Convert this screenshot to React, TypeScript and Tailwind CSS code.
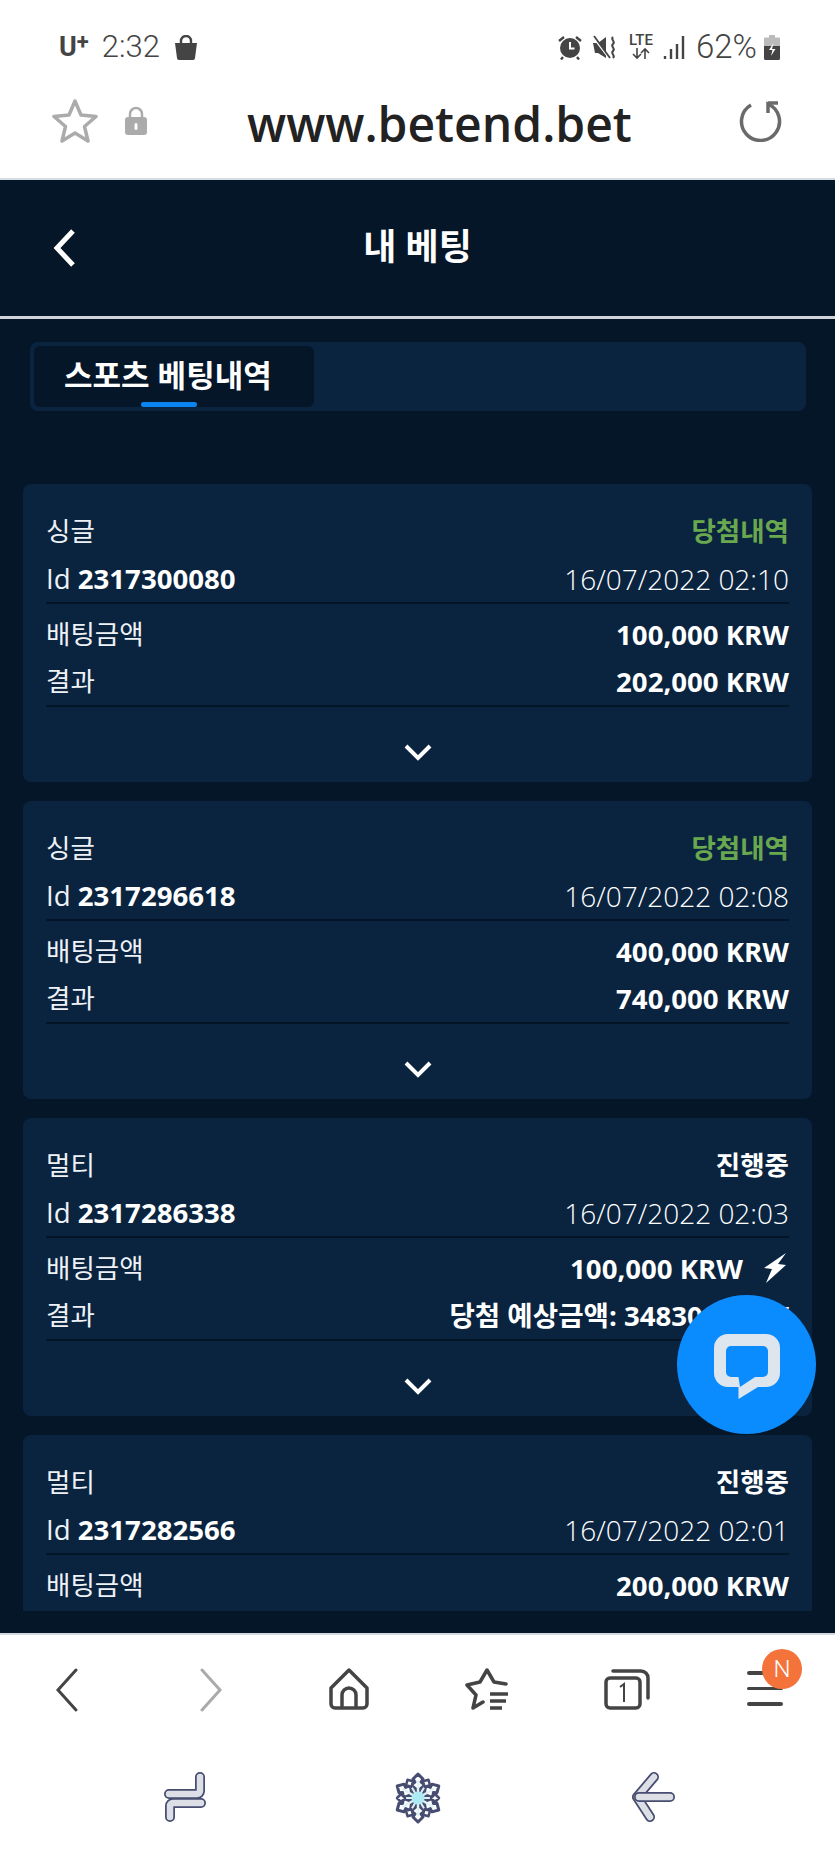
import React from 'react';

const FONT = "font-['Open_Sans','Noto_Sans_CJK_KR',sans-serif]";

interface Bet {
  kind: string;
  status: string;
  win?: boolean;
  id: string;
  date: string;
  stake: string;
  result?: string;
  bolt?: boolean;
}

const bets: Bet[] = [
  { kind: '싱글', status: '당첨내역', win: true, id: '2317300080', date: '16/07/2022 02:10', stake: '100,000 KRW', result: '202,000 KRW' },
  { kind: '싱글', status: '당첨내역', win: true, id: '2317296618', date: '16/07/2022 02:08', stake: '400,000 KRW', result: '740,000 KRW' },
  { kind: '멀티', status: '진행중', id: '2317286338', date: '16/07/2022 02:03', stake: '100,000 KRW', result: '당첨 예상금액: 348300 KRW', bolt: true },
  { kind: '멀티', status: '진행중', id: '2317282566', date: '16/07/2022 02:01', stake: '200,000 KRW' },
];

const StatusIcons = () => (
  <div className="flex items-center">
    {/* alarm */}
    <svg width="24" height="26" viewBox="0 0 24 26" className="mr-[10px]">
      <circle cx="12" cy="14" r="10" fill="#444" />
      <path d="M12 8v6.5h4.5" stroke="#fff" strokeWidth="2" fill="none" />
      <path d="M1 7l5-4M23 7l-5-4M5 23l-2 2.500M19 23l2 2.500" stroke="#444" strokeWidth="2.400" />
    </svg>
    {/* mute */}
    <svg width="25" height="25" viewBox="0 0 25 25" className="mr-[11px]">
      <path d="M1 8h5l8-6v21l-8-5H3z" fill="#444" />
      <path d="M1 2l16 21" stroke="#fff" strokeWidth="2" />
      <path d="M2 1l16 22" stroke="#444" strokeWidth="1.800" />
      <path d="M21 2c-3 3 3 4 0 7s3 4 0 7 3 4 0 7" stroke="#444" strokeWidth="2" fill="none" />
    </svg>
    {/* lte */}
    <div className="w-[26px] mr-[9px] flex flex-col items-center">
      <span className="font-['Roboto',sans-serif] text-[15px] leading-[13px] font-medium text-[#444]">LTE</span>
      <svg width="24" height="13" viewBox="0 0 22 13">
        <path d="M7 1v10M3 7l4 4 4-4M15 12V2M11 6l4-4 4 4" stroke="#444" strokeWidth="1.600" fill="none" />
      </svg>
    </div>
    {/* signal */}
    <svg width="22" height="24" viewBox="0 0 22 24" className="mr-[11px]">
      <path d="M2 24v-3M8 24v-10M14 24v-15M20 24V1" stroke="#444" strokeWidth="2.400" />
    </svg>
    <span className="font-['Roboto',sans-serif] font-light text-[33px] leading-[32px] text-[#444] mr-[7px]">62%</span>
    {/* battery */}
    <svg width="16" height="25" viewBox="0 0 16 25">
      <path d="M5 0h6v2.500h4a1 1 0 0 1 1 1V11H0V3.500a1 1 0 0 1 1-1h4z" fill="#bbb" />
      <path d="M0 11h16v12.500a1.500 1.500 0 0 1-1.500 1.500h-13A1.500 1.500 0 0 1 0 23.500z" fill="#444" />
      <path d="M9.500 8L5 15h3.500L7 21l4.500-7H8z" fill="#fff" />
    </svg>
  </div>
);

const Pipe = ({ d }: { d: string }) => (
  <>
    <path d={d} stroke="#474d70" strokeWidth="10" fill="none" strokeLinecap="round" strokeLinejoin="round" />
    <path d={d} stroke="#dcdfe5" strokeWidth="6.500" fill="none" strokeLinecap="round" strokeLinejoin="round" />
  </>
);

const Snowflake = () => (
  <svg width="50" height="52" viewBox="-25 -26 50 52">
    <circle r="18" fill="#474d70" />
    {[0, 60, 120, 180, 240, 300].map((r) => (
      <g key={r} transform={`rotate(${r})`}>
        <path d="M0 -24l5 5 -2 3 4 3 -7 6 -7 -6 4 -3 -2 -3z" fill="#fff" stroke="#474d70" strokeWidth="3" strokeLinejoin="round" />
        <path d="M0 -18V0" stroke="#dff3f7" strokeWidth="2.400" />
      </g>
    ))}
    {[30, 90, 150, 210, 270, 330].map((r) => (
      <g key={r} transform={`rotate(${r})`}>
        <path d="M0 -15V0" stroke="#dff3f7" strokeWidth="2" />
        <path d="M0 -21l4 4 -4 4 -4 -4z" fill="#fff" stroke="#474d70" strokeWidth="2.500" strokeLinejoin="round" />
      </g>
    ))}
    <circle r="6.500" fill="#aeeaf3" />
  </svg>
);

const BetCard = ({ bet }: { bet: Bet }) => (
  <div className="shrink-0 h-[298px] rounded-[8px] bg-[#0a2440] px-[23px] pt-[24px] text-[#eef2f6]">
    <div className="flex h-[47px] items-center justify-between text-[26.500px]">
      <span>{bet.kind}</span>
      <span className={`font-bold ${bet.win ? 'text-[#6aa84f]' : 'text-white'}`}>{bet.status}</span>
    </div>
    <div className="flex h-[47px] items-center justify-between border-b-2 border-[#041526] box-content text-[27.600px]">
      <span>
        Id <b className="font-bold text-white">{bet.id}</b>
      </span>
      <span className="text-[28px] font-light text-white">{bet.date}</span>
    </div>
    <div className="mt-[7px] flex h-[47px] items-center justify-between">
      <span className="text-[26.500px]">배팅금액</span>
      <span className="flex items-center text-[27.600px] font-bold text-white">
        {bet.stake}
        {bet.bolt && (
          <svg width="24" height="30" viewBox="0 0 24 30" className="ml-[20px] mr-[2px]">
            <path d="M23 0L1 15l8 1-6 14 20-18-8-1z" fill="#fff" />
          </svg>
        )}
      </span>
    </div>
    {bet.result && (
      <div className="flex h-[47px] items-center justify-between border-b-2 border-[#041526] box-content">
        <span className="text-[26.500px]">결과</span>
        <span className="text-[27.600px] font-bold text-white">{bet.result}</span>
      </div>
    )}
    <div className="flex justify-center pt-[36px]">
      <svg width="30" height="18" viewBox="0 0 30 18">
        <path d="M3 3l12 12L27 3" stroke="#fff" strokeWidth="4" fill="none" />
      </svg>
    </div>
  </div>
);

export default function App() {
  return (
    <div className={`relative flex h-[1856px] w-[835px] flex-col overflow-hidden bg-white ${FONT}`}>
      {/* phone status bar */}
      <div className="flex h-[63px] shrink-0 items-end justify-between pl-[59px] pr-[55px]">
        <div className="flex items-center font-['Roboto',sans-serif] text-[#444]">
          <span className="text-[27px] leading-[32px] font-bold">U</span>
          <span className="mb-[10px] text-[22px] leading-[18px] font-bold">+</span>
          <span className="ml-[13px] text-[31px] leading-[32px] font-light">2:32</span>
          <svg width="24" height="25" viewBox="0 0 24 25" className="ml-[14px]">
            <path d="M1 8h22l-2 15a2 2 0 0 1-2 2H5a2 2 0 0 1-2-2z" fill="#444" />
            <path d="M7 11V6a5 5 0 0 1 10 0v5" stroke="#444" strokeWidth="2.400" fill="none" />
          </svg>
        </div>
        <StatusIcons />
      </div>

      {/* browser address bar */}
      <div className="flex h-[117px] shrink-0 items-center border-b-2 border-[#d5dde2] pl-[52px] pr-[53px]">
        <svg width="46" height="45" viewBox="0 0 46 45">
          <path d="M23 3l6 14 15 1.500-11.500 10L36 43l-13-8-13 8 3.500-14.500L2 18.500 17 17z" fill="none" stroke="#ababab" strokeWidth="3.500" strokeLinejoin="round" />
        </svg>
        <svg width="24" height="30" viewBox="0 0 24 30" className="ml-[26px]">
          <path d="M6 12V8a6 6 0 0 1 12 0v4" stroke="#ababab" strokeWidth="2.500" fill="none" />
          <rect x="1" y="11" width="22" height="18" rx="3" fill="#ababab" />
          <rect x="10.500" y="17" width="3" height="7" rx="1.500" fill="#fff" />
        </svg>
        <span className="ml-[99px] mt-[6px] flex-1 text-[48px] leading-[56px] font-semibold text-[#222]">www.betend.bet</span>
        <svg width="44" height="42" viewBox="0 0 44 42">
          <path d="M13 5a19 19 0 1 0 17-1V13" stroke="#6a6a6a" strokeWidth="3.500" fill="none" />
          <path d="M30 3h10" stroke="#6a6a6a" strokeWidth="3.500" />
        </svg>
      </div>

      {/* page */}
      <div className="flex min-h-0 flex-1 flex-col overflow-hidden bg-[#051628]">
        <div className="relative flex h-[139px] shrink-0 items-center justify-center border-b-[3px] border-[#d0d3d8]">
          <svg width="24" height="38" viewBox="0 0 24 38" className="absolute left-[52px] top-[49px]">
            <path d="M21 2L5 19l16 17" stroke="#fff" strokeWidth="5" fill="none" />
          </svg>
          <span className="mt-[-2px] text-[36px] leading-[40px] font-bold text-white">내 베팅</span>
        </div>

        <div className="ml-[30px] mt-[23px] flex h-[69px] w-[776px] shrink-0 items-stretch rounded-[8px] bg-[#0a2440] p-[4px]">
          <div className="relative flex w-[280px] items-center rounded-[6px] bg-[#051628] pb-[4px] pl-[30px]">
            <span className="text-[31px] leading-[40px] font-bold text-white">스포츠 베팅내역</span>
            <div className="absolute bottom-0 left-[107px] h-[5px] w-[56px] rounded-[3px] bg-[#0a84f0]" />
          </div>
        </div>

        <div className="mx-[23px] mt-[73px] flex min-h-0 flex-1 flex-col gap-[19px] overflow-hidden">
          {bets.map((bet) => (
            <BetCard key={bet.id} bet={bet} />
          ))}
        </div>
        <div className="h-[22px] shrink-0" />
      </div>

      {/* browser bottom bar */}
      <div className="relative h-[120px] shrink-0 border-t-2 border-[#d5d8dc]">
        <div className="absolute right-[33px] top-[14px] z-10 flex h-[40px] w-[40px] items-center justify-center rounded-full bg-[#f4733b] font-['Roboto',sans-serif] text-[24px] font-light text-white">
          N
        </div>
        <div className="flex h-full items-start pl-[56px] pt-[33px]">
          <svg width="22" height="44" viewBox="0 0 22 44">
            <path d="M20 2L2 22l18 20" stroke="#444" strokeWidth="3" fill="none" strokeLinecap="round" />
          </svg>
          <svg width="22" height="44" viewBox="0 0 22 44" className="ml-[122px]">
            <path d="M2 2l18 20L2 42" stroke="#aaa" strokeWidth="3" fill="none" strokeLinecap="round" />
          </svg>
          <svg width="42" height="42" viewBox="0 0 42 42" className="ml-[106px]">
            <path d="M21 2L3 20v16a4 4 0 0 0 4 4h28a4 4 0 0 0 4-4V20z" stroke="#444" strokeWidth="3.500" fill="none" strokeLinejoin="round" />
            <path d="M14 39V27a7 7 0 0 1 14 0v12" stroke="#444" strokeWidth="3.500" fill="none" />
          </svg>
          <svg width="46" height="42" viewBox="0 0 46 42" className="ml-[95px]">
            <path d="M41 16L29 14 22 2 15 14 2 17l9 10-3 13 10-6" stroke="#444" strokeWidth="3.500" fill="none" strokeLinejoin="round" strokeLinecap="round" />
            <path d="M25 26h18M25 33h16M25 40h12" stroke="#444" strokeWidth="3.500" />
          </svg>
          <svg width="46" height="42" viewBox="0 0 46 42" className="ml-[93px]">
            <rect x="2" y="10" width="34" height="30" rx="4" stroke="#444" strokeWidth="3.500" fill="none" />
            <path d="M9 3h28a7 7 0 0 1 7 7v20" stroke="#444" strokeWidth="3.500" fill="none" strokeLinecap="round" />
            <path d="M16 19l4-3v18" stroke="#444" strokeWidth="2" fill="none" />
          </svg>
          <div className="ml-[97px] mt-[3px] flex w-[36px] flex-col gap-[12px]">
            <div className="h-[3.500px] rounded-full bg-[#444]" />
            <div className="h-[3.500px] rounded-full bg-[#444]" />
            <div className="h-[3.500px] rounded-full bg-[#444]" />
          </div>
        </div>
      </div>

      {/* android nav keys (themed) */}
      <div className="flex h-[103px] shrink-0 items-start pl-[163px] pt-[19px]">
        <svg width="44" height="50" viewBox="0 0 44 50">
          <Pipe d="M37 5v14a3 3 0 0 1-3 3H6" />
          <Pipe d="M38 31H10a3 3 0 0 0-3 3v11" />
        </svg>
        <div className="ml-[186px]">
          <Snowflake />
        </div>
        <svg width="44" height="50" viewBox="0 0 44 50" className="ml-[188px]">
          <Pipe d="M23 5L6 25l13 20" />
          <Pipe d="M8 25h31" />
        </svg>
      </div>

      {/* chat button */}
      <div className="absolute left-[677px] top-[1295px] z-20 flex h-[139px] w-[139px] items-center justify-center rounded-full bg-[#0a8cff]">
        <svg width="66" height="66" viewBox="0 0 66 66" className="mt-[5px]">
          <path fillRule="evenodd" d="M14 0h38a14 14 0 0 1 14 14v25a14 14 0 0 1-14 14H44L24.500 65V53H14A14 14 0 0 1 0 39V14A14 14 0 0 1 14 0zM17 12a5 5 0 0 0-5 5v21a5 5 0 0 0 5 5h7.500l1.500 10 15-10h8a5 5 0 0 0 5-5V17a5 5 0 0 0-5-5z" fill="#dde5ee" />
        </svg>
      </div>
    </div>
  );
}
